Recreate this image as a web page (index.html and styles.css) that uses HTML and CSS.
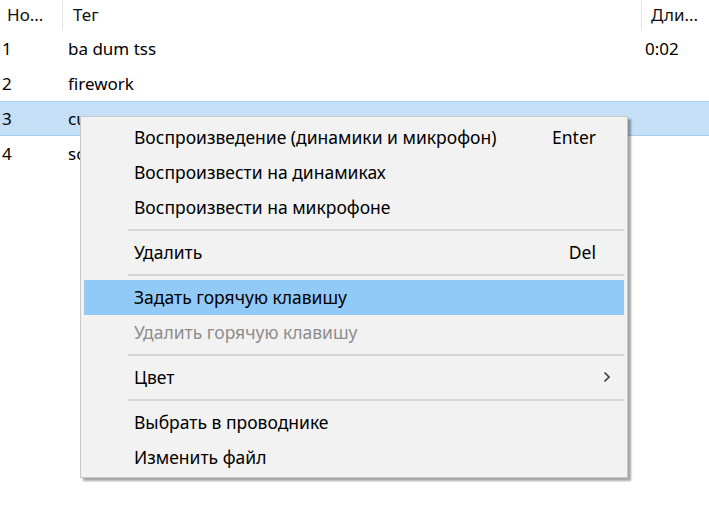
FILE: index.html
```html
<!DOCTYPE html>
<html lang="ru">
<head>
<meta charset="utf-8">
<link rel="stylesheet" href="styles.css">
</head>
<body>
<div class="screen">
  <div class="list">
    <div class="header">
      <div class="hcell c-num">Но...</div>
      <div class="hcell c-tag sep">Тег</div>
      <div class="hcell c-len sep">Дли...</div>
    </div>
    <div class="row">
      <div class="cell c-num">1</div>
      <div class="cell c-tag">ba dum tss</div>
      <div class="cell c-len">0:02</div>
    </div>
    <div class="row">
      <div class="cell c-num">2</div>
      <div class="cell c-tag">firework</div>
      <div class="cell c-len"></div>
    </div>
    <div class="row selected">
      <div class="cell c-num">3</div>
      <div class="cell c-tag">cu</div>
      <div class="cell c-len"></div>
    </div>
    <div class="row">
      <div class="cell c-num">4</div>
      <div class="cell c-tag">so</div>
      <div class="cell c-len"></div>
    </div>
  </div>

  <div class="menu">
    <div class="item"><span class="label">Воспроизведение (динамики и микрофон)</span><span class="key">Enter</span></div>
    <div class="item"><span class="label">Воспроизвести на динамиках</span></div>
    <div class="item"><span class="label">Воспроизвести на микрофоне</span></div>
    <div class="separator"></div>
    <div class="item"><span class="label">Удалить</span><span class="key">Del</span></div>
    <div class="separator"></div>
    <div class="item hover"><span class="label">Задать горячую клавишу</span></div>
    <div class="item disabled"><span class="label">Удалить горячую клавишу</span></div>
    <div class="separator"></div>
    <div class="item"><span class="label">Цвет</span><span class="arrow"><svg width="8" height="12" viewBox="0 0 8 12"><path d="M1.5 1.5 L6 6 L1.5 10.5" fill="none" stroke="#3c3c3c" stroke-width="1.6"/></svg></span></div>
    <div class="separator"></div>
    <div class="item"><span class="label">Выбрать в проводнике</span></div>
    <div class="item"><span class="label">Изменить файл</span></div>
  </div>
</div>
</body>
</html>
```
FILE: styles.css
```css
html, body {
  margin: 0;
  padding: 0;
  background: #ffffff;
}
body {
  font-family: "Noto Sans", "Open Sans", sans-serif;
  font-size: 17px;
  color: #000;
}
.screen {
  position: relative;
  width: 709px;
  height: 505px;
  overflow: hidden;
}
.list {
  display: flex;
  flex-direction: column;
}
.header, .row {
  display: grid;
  grid-template-columns: 62px 579px 68px;
}
.header {
  height: 31px;
}
.hcell {
  display: flex;
  align-items: center;
  padding-left: 7px;
  height: 30px;
  padding-bottom: 2px;
  box-sizing: border-box;
  color: #111;
}
.hcell.sep {
  border-left: 1px solid #e5e5e5;
  padding-left: 10px;
}
.hcell.c-len { padding-left: 9px; }
.row {
  height: 35px;
  box-sizing: border-box;
  padding-bottom: 1px;
}
.row.selected {
  background: #c4dff6;
  border-top: 1px solid #a6d0f2;
  border-bottom: 1px solid #a6d0f2;
  padding-bottom: 0;
}
.cell {
  display: flex;
  align-items: center;
}
.cell.c-num { padding-left: 2px; }
.cell.c-tag { padding-left: 6px; }
.cell.c-len { padding-left: 4px; }

.menu {
  position: absolute;
  left: 80px;
  top: 116px;
  width: 548px;
  box-sizing: border-box;
  background: #f2f2f2;
  border: 1px solid #c9c9c9;
  padding: 3px 3px 2px 3px;
  box-shadow: 3px 3px 2px rgba(0,0,0,0.35);
  font-size: 17.5px;
}
.item {
  height: 35px;
  display: flex;
  align-items: center;
  padding-left: 50px;
  padding-right: 28px;
  padding-bottom: 2px;
  box-sizing: border-box;
  color: #000;
}
.item .label { flex: 1; }
.item .key { text-align: right; }
.item.hover { background: #91c9f7; }
.item.disabled { color: #8d8d8d; }
.item .arrow {
  display: flex;
  align-items: center;
  margin-right: -15px;
}
.separator {
  height: 10px;
  display: flex;
  align-items: center;
  margin-left: 44px;
}
.separator::before {
  content: "";
  flex: 1;
  height: 2px;
  background: #d7d7d7;
}
```
